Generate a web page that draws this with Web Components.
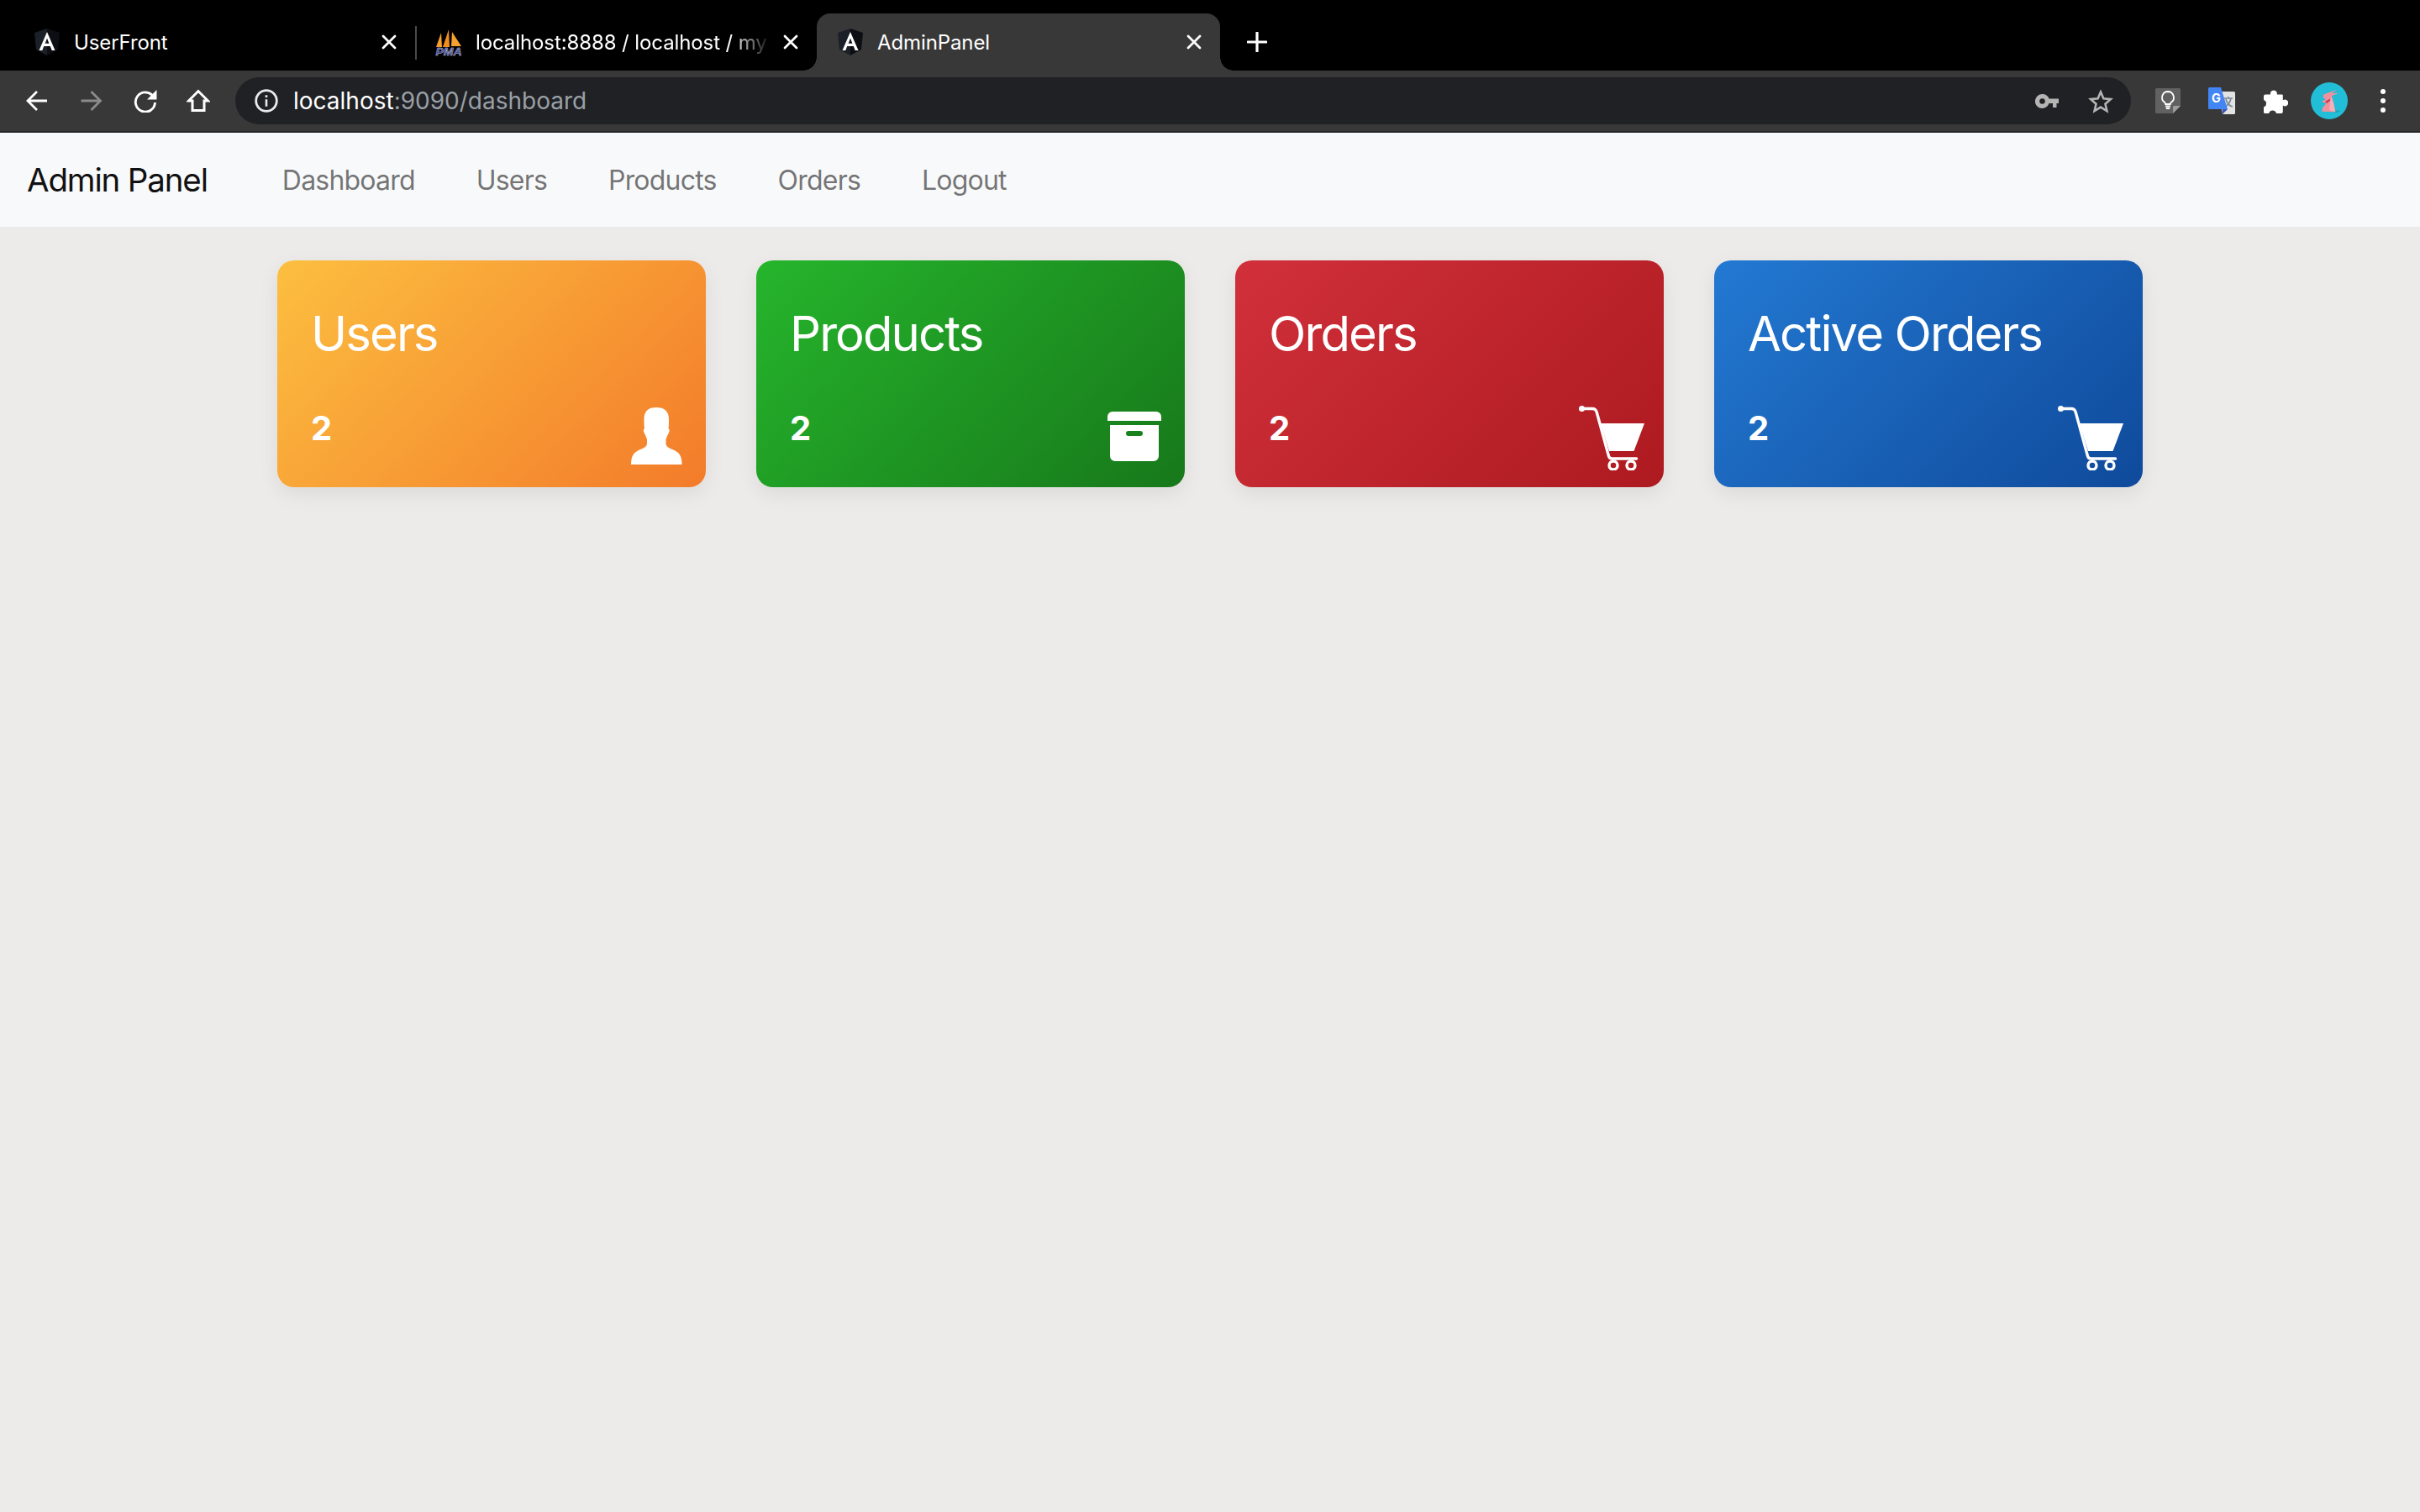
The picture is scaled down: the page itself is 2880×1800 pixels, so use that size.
<!DOCTYPE html>
<html>
<head>
<meta charset="utf-8">
<title>AdminPanel</title>
<style>
  html, body { margin: 0; padding: 0; }
  body { background: #edebe9; font-family: Inter, "Liberation Sans", sans-serif; min-height: 1800px; }
</style>
</head>
<body>
<browser-tabs>
  <browser-tab icon="angular" sep>UserFront</browser-tab>
  <browser-tab icon="pma" fade>localhost:8888 / localhost / my</browser-tab>
  <browser-tab icon="angular" active>AdminPanel</browser-tab>
</browser-tabs>
<browser-toolbar></browser-toolbar>
<admin-navbar brand="Admin Panel">
  <nav-link>Dashboard</nav-link>
  <nav-link>Users</nav-link>
  <nav-link>Products</nav-link>
  <nav-link>Orders</nav-link>
  <nav-link>Logout</nav-link>
</admin-navbar>
<card-row>
  <stat-card title="Users" value="2" icon="user" from="#fcbf40" to="#f37b2a"></stat-card>
  <stat-card title="Products" value="2" icon="box" from="#26b52c" to="#17781a"></stat-card>
  <stat-card title="Orders" value="2" icon="cart" from="#d1303a" to="#ad1a20"></stat-card>
  <stat-card title="Active Orders" value="2" icon="cart" from="#2379d2" to="#0f4a9b"></stat-card>
</card-row>

<script>
// favicons used by the tabs
const favicons = {
  angular: `<svg width="32" height="32" viewBox="0 0 32 32">
    <polygon points="16,0 1,5 3,25 16,32" fill="#1b1f27"/>
    <polygon points="16,0 31,5 29,25 16,32" fill="#0c0e13"/>
    <path d="M16 4 L6.5 26 H10.3 L12.2 21 H19.8 L21.7 26 H25.5 Z M13.6 17.8 L16 11.6 L18.4 17.800 Z" fill="#fff" fill-rule="evenodd"/>
  </svg>`,
  pma: `<svg width="32" height="32" viewBox="0 0 32 32" style="overflow:visible">
    <polygon points="1,22 7,5 8,22" fill="#f6a02f"/>
    <polygon points="9,22 16,1 17,22" fill="#f18c1e"/>
    <polygon points="19,21 20,4 31,21" fill="#f6a02f"/>
    <text x="0.5" y="31.5" font-family="Liberation Sans" font-style="italic" font-weight="700" font-size="12" textLength="31" lengthAdjust="spacingAndGlyphs" fill="#434c8e" stroke="#c9cbe6" stroke-width=".4">PMA</text>
  </svg>`
};

class BrowserTabs extends HTMLElement {
  constructor() {
    super();
    this.attachShadow({ mode: "open" });
    this.shadowRoot.innerHTML = `
      <style>
        :host { display: flex; height: 84px; background: #000; padding-left: 16px; box-sizing: border-box; align-items: flex-end; }
        .plus { margin-left: 32px; align-self: flex-start; margin-top: 38px; width: 24px; height: 24px; }
      </style>
      <slot></slot>
      <svg class="plus" viewBox="0 0 24 24"><path d="M12 1v22M1 12h22" stroke="#fff" stroke-width="3.2" stroke-linecap="round" fill="none"/></svg>`;
  }
}

class BrowserTab extends HTMLElement {
  constructor() {
    super();
    this.attachShadow({ mode: "open" });
  }
  connectedCallback() {
    const icon = favicons[this.getAttribute("icon")] || "";
    this.shadowRoot.innerHTML = `
      <style>
        :host { display: flex; position: relative; width: 478px; height: 68px; box-sizing: border-box; align-items: center; padding: 0 22px 0 24px; color: #fff; font-size: 24px; letter-spacing: -.1px; font-family: Inter, "Liberation Sans", sans-serif; }
        :host([active]) { width: 480px; background: #383838; border-radius: 16px 16px 0 0; }
        :host([active])::before, :host([active])::after { content: ""; position: absolute; bottom: 0; width: 16px; height: 16px; }
        :host([active])::before { left: -16px; background: radial-gradient(circle at 0 0, transparent 15.5px, #383838 16px); }
        :host([active])::after { right: -16px; background: radial-gradient(circle at 100% 0, transparent 15.5px, #383838 16px); }
        :host([sep])::after { content: ""; position: absolute; right: -2px; top: 15px; width: 2px; height: 40px; background: #4a4a4a; }
        .ico { width: 32px; height: 32px; flex: none; margin-right: 16px; }
        .title { flex: 1; white-space: nowrap; overflow: hidden; }
        :host([fade]) .title { -webkit-mask-image: linear-gradient(to right, #000 86%, transparent 100%); mask-image: linear-gradient(to right, #000 86%, transparent 100%); }
        .close { width: 18px; height: 18px; flex: none; margin-left: 14px; }
      </style>
      <span class="ico">${icon}</span>
      <span class="title"><slot></slot></span>
      <svg class="close" viewBox="0 0 18 18"><path d="M2 2l14 14M16 2L2 16" stroke="#fff" stroke-width="2.8" stroke-linecap="round"/></svg>`;
  }
}

class BrowserToolbar extends HTMLElement {
  constructor() {
    super();
    this.attachShadow({ mode: "open" });
    this.shadowRoot.innerHTML = `
      <style>
        :host { display: flex; height: 74px; background: #383838; border-bottom: 2px solid #272727; box-sizing: border-box; align-items: flex-start; padding: 8px 0 0 31px; font-family: Inter, "Liberation Sans", sans-serif; }
        svg { flex: none; display: block; }
        .nav { display: flex; align-items: center; height: 56px; }
        .omni { flex: none; width: 2256px; margin-left: 30px; height: 56px; box-sizing: border-box; border-radius: 28px; background: #202124; display: flex; align-items: center; padding: 0 21px 0 23px; }
        .url { margin-left: 18px; font-size: 28px; color: #fff; flex: 1; }
        .url span { color: #9aa0a6; }
        .ext { display: flex; align-items: center; height: 56px; }
      </style>
      <div class="nav">
        <svg width="26" height="26" viewBox="0 0 26 26"><path d="M25 13H2M13 2L2 13l11 11" fill="none" stroke="#fff" stroke-width="2.8"/></svg>
        <svg style="margin-left:38px" width="27" height="26" viewBox="0 0 26 26"><path d="M1 13h23M13 2l11 11-11 11" fill="none" stroke="#8b8b8b" stroke-width="2.8"/></svg>
        <svg style="margin-left:37px" width="28" height="28" viewBox="0 0 28 28"><path d="M23.5 9A11.6 11.6 0 1 0 25.5 16" fill="none" stroke="#fff" stroke-width="2.9"/><path d="M27.5 1v11.5H16z" fill="#fff"/></svg>
        <svg style="margin-left:35px" width="28" height="28" viewBox="0 0 28 28"><path d="M14 2.5L2.5 14H7v11.5h14V14h4.500z" fill="none" stroke="#fff" stroke-width="3" stroke-linejoin="miter"/></svg>
      </div>
      <div class="omni">
        <svg width="28" height="28" viewBox="0 0 28 28"><circle cx="14" cy="14" r="12.300" fill="none" stroke="#e8eaed" stroke-width="2.800"/><path d="M12.700 12.300h2.600v8.500h-2.600zM12.700 7.300h2.600v2.700h-2.600z" fill="#e8eaed"/></svg>
        <div class="url">localhost<span>:9090/dashboard</span></div>
        <svg width="28" height="17" viewBox="0 0 28 17"><path fill-rule="evenodd" d="M8.500 0a8.500 8.500 0 0 1 8 5.500H28v5.500h-2.500v5h-4.500v-5h-4.500a8.500 8.500 0 1 1-8-11zm0 5.200a3.300 3.300 0 1 0 0 6.600 3.300 3.300 0 0 0 0-6.600z" fill="#b4b4b4"/></svg>
        <svg style="margin-left:35px" width="30" height="29" viewBox="0 0 30 29"><path d="M15 3.500l3.400 7.800 8.500.8-6.400 5.600 1.900 8.300L15 21.600 7.600 26l1.900-8.300L3.100 12.100l8.500-.8z" fill="none" stroke="#b4b4b4" stroke-width="2.600"/></svg>
      </div>
      <div class="ext">
        <svg style="margin-left:29px" width="30" height="30" viewBox="0 0 30 30">
          <path d="M1.500 0h27A1.500 1.500 0 0 1 30 1.500V21l-9 9H1.500A1.500 1.500 0 0 1 0 28.500V1.500A1.500 1.500 0 0 1 1.500 0z" fill="#616161"/>
          <path d="M30 21h-7.500a1.500 1.500 0 0 0-1.500 1.500V30z" fill="#9e9e9e"/>
          <path d="M15 4a7 7 0 0 0-4 12.700c.7.6 1.200 1.300 1.200 2.300h5.600c0-1 .5-1.700 1.200-2.300A7 7 0 0 0 15 4z" fill="none" stroke="#fff" stroke-width="1.800"/>
          <path d="M12 21.500h6M12.800 24h4.400" stroke="#fff" stroke-width="1.800"/>
        </svg>
        <svg style="margin-left:33px" width="32" height="32" viewBox="0 0 32 32">
          <path d="M13 5h17.500a1.500 1.500 0 0 1 1.500 1.500v24a1.500 1.500 0 0 1-1.500 1.500H17z" fill="#e3e3e3"/>
          <path d="M19 13h10M24 11v2M27 13c-1 5-4 9-8 10M21 14c1 4 4 8 8 9" fill="none" stroke="#7d8b96" stroke-width="1.700"/>
          <path d="M1.500 0H15l8 26H1.500A1.500 1.500 0 0 1 0 24.500V1.500A1.500 1.500 0 0 1 1.500 0z" fill="#4285f4"/>
          <path d="M17 26h6l-6 6z" fill="#3b55b8"/>
          <text x="4" y="18" font-family="Inter, Liberation Sans" font-weight="700" font-size="14.500" fill="#fff">G</text>
        </svg>
        <svg style="margin-left:34px" width="29" height="29" viewBox="0 0 29 29"><path d="M2 6.500h6a5 5 0 0 1 .5-3.200 4 4 0 0 1 6.800 0A5 5 0 0 1 15.800 6.500h6a1 1 0 0 1 1 1v5.800a4.500 4.500 0 0 1 6 1.200 4 4 0 0 1-6 5v7.500a2 2 0 0 1-2 2h-5.800a4.500 4.500 0 0 0-8.800 0H1.500a1.500 1.500 0 0 1-1.500-1.500v-6a4.500 4.500 0 0 0 0-8.500V8.500a2 2 0 0 1 2-2z" fill="#fff"/></svg>
        <svg style="margin-left:27px" width="44" height="44" viewBox="0 0 44 44">
          <circle cx="22" cy="22" r="22" fill="#22bdd6"/>
          <path d="M28 33l8 1-5 2h-4z" fill="#1ba6bc"/>
          <polygon points="31.700,8.700 25,13 33.300,13 25,16 27.300,25.300 29.300,35.300 13.300,34.700 14,30.300 18.300,25.300 12.700,22.700 18.300,20.300 15,18.700 15,14.700 21.700,12" fill="#f2919e"/>
          <polygon points="17,23 23,19.500 23.500,21.500 19,25" fill="#c73a50"/>
          <polygon points="24,17 27.300,25.300 29.300,35.300 22,33" fill="#f7b0b9"/>
        </svg>
        <svg style="margin-left:39px" width="6" height="28" viewBox="0 0 6 28"><circle cx="3" cy="3" r="3" fill="#fff"/><circle cx="3" cy="14" r="3" fill="#fff"/><circle cx="3" cy="25" r="3" fill="#fff"/></svg>
      </div>`;
  }
}

class AdminNavbar extends HTMLElement {
  constructor() {
    super();
    this.attachShadow({ mode: "open" });
  }
  connectedCallback() {
    this.shadowRoot.innerHTML = `
      <style>
        :host { display: flex; height: 112px; background: #f8f9fa; align-items: center; padding-left: 32px; box-sizing: border-box; font-family: Inter, "Liberation Sans", sans-serif; }
        .brand { font-size: 38.5px; color: #111; margin-right: 89px; letter-spacing: -1.15px; }
        .links { display: flex; gap: 73px; }
      </style>
      <span class="brand">${this.getAttribute("brand")}</span>
      <div class="links"><slot></slot></div>`;
  }
}

class NavLink extends HTMLElement {
  constructor() {
    super();
    this.attachShadow({ mode: "open" });
    this.shadowRoot.innerHTML = `
      <style>:host { display: block; font-size: 32px; letter-spacing: -.8px; color: rgba(0,0,0,.55); }</style>
      <slot></slot>`;
  }
}

class CardRow extends HTMLElement {
  constructor() {
    super();
    this.attachShadow({ mode: "open" });
    this.shadowRoot.innerHTML = `
      <style>:host { display: grid; grid-template-columns: repeat(4, 510px); gap: 60px; justify-content: center; padding-top: 40px; }</style>
      <slot></slot>`;
  }
}

// icons for the dashboard cards
const cardIcons = {
  user: `<svg width="62" height="68" viewBox="0 0 62 68" style="margin:0 -12px 27px 0"><path d="M31 0c9 0 15 4 15 14 0 5 0 8-.5 11 1.500 1 1.500 3.500 0 6-1 2-2 4-3 7v5c0 4 5 6 10 8 6 3 9 7 9 17H1c0-10 3-14 9-17 5-2 10-4 10-8v-5c-1-3-2-5-3-7-1.500-2.500-1.500-5 0-6-.5-3-.5-6-.5-11C16.500 4 22 0 31 0z" fill="#fff"/></svg>`,
  box: `<svg width="64" height="59" viewBox="0 0 64 59" style="margin:0 -12px 31px 0"><path d="M6 0h52a6 6 0 0 1 6 6v5H0V6a6 6 0 0 1 6-6z" fill="#fff"/><path fill-rule="evenodd" d="M3 16h58v37a6 6 0 0 1-6 6H9a6 6 0 0 1-6-6zM25 23a3 3 0 0 0 0 6h14a3 3 0 0 0 0-6z" fill="#fff"/></svg>`,
  cart: `<svg width="78" height="77" viewBox="0 0 78 77" style="margin:0 -17px 20px 0"><path d="M3 3.500h13c3 0 4.500 1.500 5.300 4.500l14.200 52c.5 2 1.800 3 4 3h29" fill="none" stroke="#fff" stroke-width="3.400" stroke-linecap="round"/><circle cx="3.500" cy="3.500" r="3.500" fill="#fff"/><path d="M26 21h52L65.500 54H36z" fill="#fff"/><circle cx="41" cy="71" r="5" fill="none" stroke="#fff" stroke-width="3.400"/><circle cx="62" cy="71" r="5" fill="none" stroke="#fff" stroke-width="3.400"/></svg>`
};

class StatCard extends HTMLElement {
  constructor() {
    super();
    this.attachShadow({ mode: "open" });
  }
  connectedCallback() {
    const from = this.getAttribute("from");
    const to = this.getAttribute("to");
    this.shadowRoot.innerHTML = `
      <style>
        :host { display: flex; flex-direction: column; height: 270px; box-sizing: border-box; padding: 0 40px; border-radius: 20px; color: #fff; background: linear-gradient(135deg, ${from}, ${to}); box-shadow: 0 8px 24px rgba(0,0,0,.07); font-family: Inter, "Liberation Sans", sans-serif; }
        h3 { margin: 53px 0 0; font-size: 58px; line-height: 68px; font-weight: 400; letter-spacing: -1.9px; }
        .foot { flex: 1; display: flex; justify-content: space-between; align-items: flex-end; }
        .num { font-size: 40px; font-weight: 700; line-height: 48px; margin-bottom: 46px; }
        svg { display: block; }
      </style>
      <h3>${this.getAttribute("title")}</h3>
      <div class="foot">
        <span class="num">${this.getAttribute("value")}</span>
        ${cardIcons[this.getAttribute("icon")]}
      </div>`;
  }
}

customElements.define("browser-tabs", BrowserTabs);
customElements.define("browser-tab", BrowserTab);
customElements.define("browser-toolbar", BrowserToolbar);
customElements.define("admin-navbar", AdminNavbar);
customElements.define("nav-link", NavLink);
customElements.define("card-row", CardRow);
customElements.define("stat-card", StatCard);
</script>
</body>
</html>
